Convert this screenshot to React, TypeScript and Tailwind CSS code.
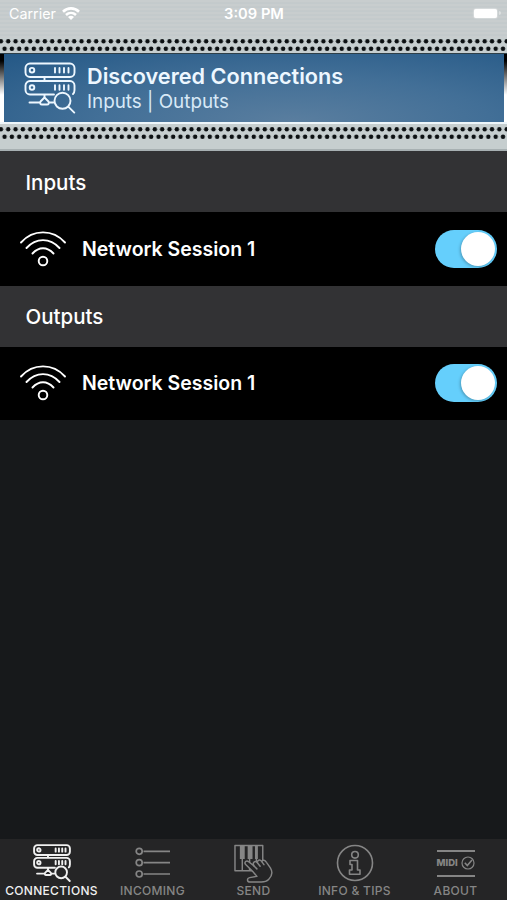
import { useState } from "react"

type IconProps = { className?: string }

function DotStrip({ id }: { id: string }) {
  return (
    <svg width="507" height="14" className="block">
      <defs>
        <pattern id={id} x="0.9" width="7.33" height="14" patternUnits="userSpaceOnUse">
          <circle cx="0" cy="3.3" r="2.2" fill="#0c1012" />
          <circle cx="7.33" cy="3.3" r="2.2" fill="#0c1012" />
          <circle cx="3.66" cy="10.7" r="2.2" fill="#0c1012" />
        </pattern>
      </defs>
      <rect width="507" height="14" fill={`url(#${id})`} />
    </svg>
  )
}

function ServerSearchIcon({ className }: IconProps) {
  return (
    <svg viewBox="0 0 52 52" className={className} fill="none" stroke="currentColor" strokeLinecap="round" strokeLinejoin="round">
      <rect x="1.5" y="1.5" width="49" height="13.5" rx="4.5" />
      <path d="M30 32.500H6a4.500 4.500 0 0 1-4.500-4.500v-4.500A4.500 4.500 0 0 1 6 19h40a4.500 4.500 0 0 1 4.500 4.500V28q0 2.500-1.500 4M20.500 15v4M20.500 32.500v2.500" />
      <circle cx="8" cy="8.200" r="2.300" />
      <circle cx="8" cy="25.500" r="2.300" />
      <path d="M31 6v4.500M35.500 6v4.500M40 6v4.500M44.500 6v4.500M31 23.300v4.500M35.500 23.300v4.500M40 23.300v4.500M44.500 23.300v4.500" />
      <path d="M5.500 40.500H16M25 40.500h4.500M20.500 35.500l-4 4q-1 3 1.500 3h5q2.500 0 1.500-3z" />
      <circle cx="38.500" cy="38.800" r="8" />
      <path d="M44.500 44.800l5.800 5.800" />
    </svg>
  )
}

function WifiIcon({ className }: IconProps) {
  return (
    <svg viewBox="0 0 46 36" className={className} fill="none" stroke="currentColor" strokeWidth="1.9" strokeLinecap="round">
      <path d="M1 11.500C13-2 33-2 45 11.500M6.500 17C16 6.500 30 6.500 39.500 17M12.500 22.500C19 15.500 27 15.500 33.500 22.500" />
      <circle cx="23" cy="30" r="4.300" />
    </svg>
  )
}

function StatusWifiIcon() {
  return (
    <svg width="18" height="14" viewBox="0 0 18 14" fill="none" stroke="white" strokeWidth="2.600">
      <path d="M1 4.700C5.600.300 12.400.300 17 4.700M4 8C7 5.300 11 5.300 14 8" />
      <path d="M6 10Q9 7.500 12 10L9 13z" fill="white" stroke="none" />
    </svg>
  )
}

function ListIcon({ className }: IconProps) {
  return (
    <svg viewBox="0 0 36 32" className={className} fill="none" stroke="currentColor" strokeWidth="1.700">
      <circle cx="4.200" cy="4.300" r="3" />
      <circle cx="4.200" cy="15.700" r="3" />
      <circle cx="4.200" cy="27" r="3" />
      <path d="M8.500 4.300H35M8.500 15.700H35M8.500 27H35" />
    </svg>
  )
}

function PianoIcon({ className }: IconProps) {
  return (
    <svg viewBox="0 0 40 40" className={className} fill="none" stroke="currentColor" strokeWidth="1.500" strokeLinejoin="round" strokeLinecap="round">
      <path d="M1 1.500h28.500v26H1zM8.500 15v12.500M16 15v12.500M23 15v12.500" />
      <path d="M6 1.500h5v14H6zM14 1.500h5v14h-5zM21.500 1.500h3v14h-3z" fill="currentColor" stroke="none" />
      <path
        d="M19.500 28.500L12 21c-2-2.200.800-4.800 3-2.800l5.500 4.300c-2-3.500 1-5.800 3.500-3.300-.300-2.800 2.500-3.700 4.500-1.200.800-2.200 3.200-1.700 4.800.800l4 5.700c2.700 4.500 1.700 8.500-1.800 12-2 2-4.500 2.500-7.500 2.500H16.500c-3.200 0-3.700-3.800-.5-4.500l7.500-1.300z"
        fill="#252526"
      />
      <path d="M20.500 22.500l3 3M24 19.200l2.800 3.600M28.500 18l2.200 3.200" />
    </svg>
  )
}

function InfoIcon({ className }: IconProps) {
  return (
    <svg viewBox="0 0 38 38" className={className} fill="none" stroke="currentColor" strokeWidth="1.600" strokeLinejoin="round">
      <circle cx="19" cy="19" r="17.500" />
      <circle cx="19" cy="10.800" r="3.300" />
      <path d="M14 16.500h7.500v9.500H24v4.200H13.500V26H16v-5.500h-2z" />
    </svg>
  )
}

function CheckIcon({ className }: IconProps) {
  return (
    <svg viewBox="0 0 14 14" className={className} fill="none" stroke="currentColor" strokeWidth="1.200">
      <circle cx="7" cy="7" r="6" />
      <path d="M3.800 6.800l2.500 2.700 4.700-5.500" strokeWidth="1.600" />
    </svg>
  )
}

function Session({ name }: { name: string }) {
  const [on, setOn] = useState(true)

  return (
    <div className="flex h-[73.500px] items-center bg-black pl-5 pr-[10px]">
      <WifiIcon className="h-9 w-[46px]" />
      <span className="ml-4 flex-1 whitespace-nowrap pt-px text-[19.500px] font-semibold text-white">{name}</span>
      <button
        role="switch"
        aria-checked={on}
        aria-label={name}
        onClick={() => setOn(!on)}
        className={`flex h-[38px] w-[62px] items-center rounded-full p-[2px] ${on ? "justify-end bg-[#65cffc]" : "justify-start bg-[#39393d]"}`}
      >
        <span className="size-[34px] rounded-full bg-white shadow-[-1px_1px_3px_rgba(0,0,0,0.25)]" />
      </button>
    </div>
  )
}

function Section({ title }: { title: string }) {
  return (
    <section>
      <h2 className="flex h-[61px] items-center bg-[#323234] pl-[25.500px] pt-[3px] text-[20.500px] font-medium text-white">{title}</h2>
      <Session name="Network Session 1" />
    </section>
  )
}

const tabs = [
  { label: "CONNECTIONS", icon: <ServerSearchIcon className="size-[38px] stroke-[2.600]" />, active: true },
  { label: "INCOMING", icon: <ListIcon className="h-8 w-9" /> },
  { label: "SEND", icon: <PianoIcon className="size-[39px]" /> },
  { label: "INFO & TIPS", icon: <InfoIcon className="size-[38px]" /> },
  {
    label: "ABOUT",
    icon: (
      <span className="flex h-[27px] w-[38px] items-center justify-between border-y-2 border-current">
        <span className="text-[9.500px] font-extrabold leading-none">MIDI</span>
        <CheckIcon className="size-[14px]" />
      </span>
    ),
  },
]

export default function App() {
  return (
    <div className="flex h-[900px] w-[507px] flex-col overflow-hidden bg-[#17191b] font-['Inter','Liberation_Sans',sans-serif] text-white">
      <header className="flex h-[151px] shrink-0 flex-col border-b-2 border-[#a7b0b2] bg-[#c6cecf]">
        <div className="grid h-[38px] grid-cols-3 items-start bg-[repeating-linear-gradient(#c8cdce_0px,#c8cdce_2px,#c0c7c9_3px,#c6cdcf_4px)] pl-[9px] pr-[6px] pt-[5px]">
          <div className="flex items-center gap-[6px] text-[14.300px] leading-[18px]">
            Carrier
            <StatusWifiIcon />
          </div>
          <div className="-ml-[2px] text-center text-[14.700px] font-semibold leading-[18px]">3:09 PM</div>
          <div className="flex h-4 items-center justify-end gap-[2px]">
            <span className="h-[9px] w-[23px] rounded-[2px] bg-white shadow-[0_0_2px_white]" />
            <span className="h-1 w-[2px] rounded-r-full bg-white/40" />
          </div>
        </div>
        <DotStrip id="dots-top" />
        <div className="mt-px flex h-[71px] border-b-2 border-t border-b-[#eef6fa] border-t-[#2e4049] bg-[linear-gradient(#000_10%,#fff_60%)] pl-1 pr-[3px]">
          <div className="flex flex-1 items-center bg-[radial-gradient(ellipse_at_58%_100%,#5a7e9f_0%,#426f97_48%,#245886_100%)] pl-5">
            <ServerSearchIcon className="size-[52px] stroke-[1.900] text-[#edf7ff]" />
            <div className="ml-[11px] whitespace-nowrap pt-[2px] text-[#edf7ff]">
              <h1 className="text-[21.650px] font-semibold leading-[26px]">Discovered Connections</h1>
              <p className="text-[18.850px] leading-[26px] text-[#d8e9f7]">Inputs | Outputs</p>
            </div>
          </div>
        </div>
        <div className="mt-[2px]">
          <DotStrip id="dots-bottom" />
        </div>
      </header>
      <main className="flex-1">
        <Section title="Inputs" />
        <Section title="Outputs" />
      </main>
      <nav className="grid h-[61px] grid-cols-[103px_99px_103px_99px_103px] bg-[#252526]">
        {tabs.map((tab) => (
          <button key={tab.label} className={`flex flex-col items-center justify-start ${tab.active ? "text-[#f0f0f0]" : "text-[#858585]"}`}>
            <span className="flex h-[46px] items-center pt-[2px]">{tab.icon}</span>
            <span className="whitespace-nowrap text-[12px] font-medium leading-[12px] tracking-[0.3px]">{tab.label}</span>
          </button>
        ))}
      </nav>
    </div>
  )
}
